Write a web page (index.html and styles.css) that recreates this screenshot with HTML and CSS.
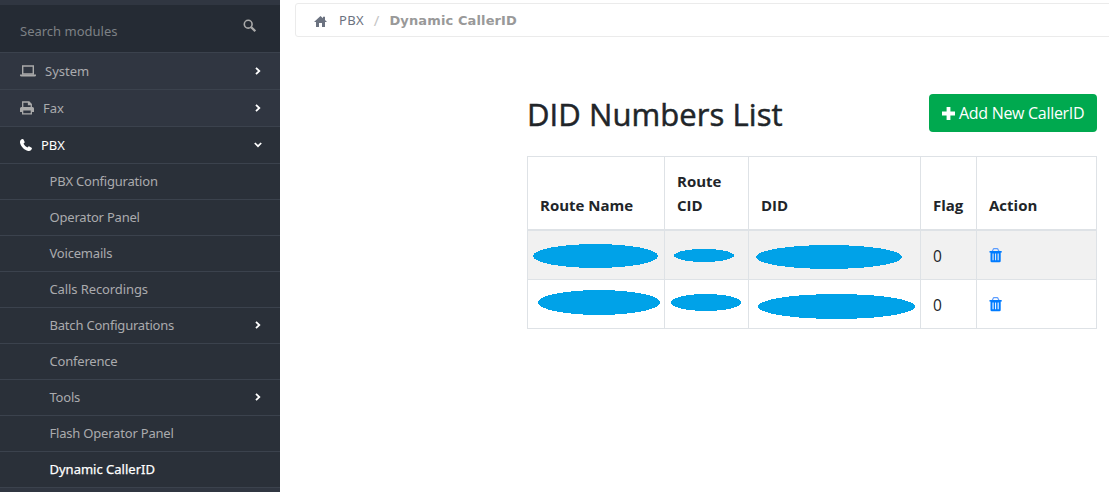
FILE: index.html
```html
<!DOCTYPE html>
<html lang="en">
<head>
<meta charset="utf-8">
<title>Dynamic CallerID</title>
<link rel="stylesheet" href="styles.css">
</head>
<body>
<svg width="0" height="0" class="defs">
  <symbol id="right" viewBox="0 0 6 8"><path d="M1 .8 4.3 4 1 7.2" fill="none" stroke="#fff" stroke-width="1.8"/></symbol>
  <symbol id="trash" viewBox="0 0 14 16"><path d="M3.3 3 4.300 1.200Q4.500.7 5 .7H8.200Q8.700.7 8.900 1.200L9.900 3" fill="none" stroke="#5c9dff" stroke-width="1.3"/><path d="M.5 3H12.7V4.6H.5z" fill="#007bff"/><path fill-rule="evenodd" d="M1.500 4H11.700V13Q11.700 14.300 10.400 14.300H2.800Q1.500 14.300 1.500 13zM3.500 5.600V12.200H4.600V5.600zM6.100 5.600V12.200H7.100V5.600zM8.600 5.600V12.200H9.700V5.600z" fill="#007bff"/></symbol>
</svg>
<div class="app">
  <aside class="sidebar">
    <div class="search"><span>Search modules</span>
      <svg class="lens" width="14" height="14" viewBox="0 0 14 14" fill="none" stroke="#aaa"><circle cx="5.2" cy="5.2" r="3.9" stroke-width="1.6"/><path d="M8.2 8.2 12.3 12.2" stroke-width="2.3"/></svg>
    </div>
    <nav>
      <a class="item"><svg width="16" height="12" viewBox="0 0 16 12"><path d="M2.700 1H13.300V9H2.700z" fill="none" stroke="#aaa" stroke-width="1.4"/><path d="M0 9.500H16V10.500Q16 11.500 14.500 11.500H1.500Q0 11.500 0 10.500z" fill="#aaa"/></svg><span>System</span><svg class="arrow" width="6" height="8"><use href="#right"/></svg></a>
      <a class="item"><svg width="14" height="14" viewBox="0 0 14 14"><path d="M2.700 7V1H9L11.300 3.200V7M8.500 1V3.700H11.300" fill="none" stroke="#aaa" stroke-width="1.3"/><path fill-rule="evenodd" d="M1.500 6H12.500Q14 6 14 7.500V11H12V13.400H2V11H0V7.500Q0 6 1.500 6zM3.300 9.500V12.200H10.700V9.500z" fill="#aaa"/></svg><span>Fax</span><svg class="arrow" width="6" height="8"><use href="#right"/></svg></a>
      <a class="item open"><svg width="12" height="12" viewBox="0 0 12 12"><path d="M2.700.1Q3.200-.1 3.500.5L4.700 2.900Q4.900 3.400 4.400 3.800L3.500 4.700Q4.800 7.100 7.400 8.500L8.400 7.600Q8.900 7.200 9.400 7.500L11.600 8.700Q12.100 9 11.900 9.600C11.500 11.500 10.100 12.200 8.200 11.900C4.300 11.200.4 7.100 0 3.500C-.1 1.600.8.400 2.700.1z" fill="#fff"/></svg><span>PBX</span><svg class="arrow down" width="8" height="6" viewBox="0 0 8 6"><path d="M.8 1 4 4.200 7.200 1" fill="none" stroke="#fff" stroke-width="1.700"/></svg></a>
      <div class="submenu">
        <a><span>PBX Configuration</span></a>
        <a><span>Operator Panel</span></a>
        <a><span>Voicemails</span></a>
        <a class="wide"><span>Calls Recordings</span></a>
        <a><span>Batch Configurations</span><svg class="arrow" width="6" height="8"><use href="#right"/></svg></a>
        <a><span>Conference</span></a>
        <a><span>Tools</span><svg class="arrow" width="6" height="8"><use href="#right"/></svg></a>
        <a><span>Flash Operator Panel</span></a>
        <a class="current"><span>Dynamic CallerID</span></a>
      </div>
    </nav>
  </aside>
  <main>
    <div class="crumbs"><svg width="13" height="11" viewBox="0 0 13 11"><path d="M6.500 0 9 2.300V.8H11V4.100L13 6H11V11H8V7H5V11H2V6H0z" fill="#6b7280"/></svg><span class="crumb">PBX</span><span class="slash">/</span><b>Dynamic CallerID</b></div>
    <section class="panel">
      <header><h1>DID Numbers List</h1><button><svg width="13" height="13" viewBox="0 0 13 13"><path d="M4.600 0H8.400V4.600H13V8.400H8.400V13H4.600V8.400H0V4.600H4.600z" fill="#fff"/></svg><span>Add New CallerID</span></button></header>
      <table>
        <colgroup><col class="c1"><col class="c2"><col class="c3"><col class="c4"><col class="c5"></colgroup>
        <thead><tr><th>Route Name</th><th>Route<br>CID</th><th>DID</th><th>Flag</th><th>Action</th></tr></thead>
        <tbody>
          <tr class="odd"><td class="mask"><svg width="136" height="48"><ellipse cx="67.500" cy="25" rx="62.500" ry="12"/></svg></td><td class="mask"><svg width="83" height="48"><ellipse cx="39" cy="24.500" rx="30" ry="6.500"/></svg></td><td class="mask"><svg width="171" height="48"><ellipse cx="80" cy="26" rx="73" ry="12"/></svg></td><td><span class="num">0</span></td><td><svg class="bin" width="14" height="16"><use href="#trash"/></svg></td></tr>
          <tr><td class="mask"><svg width="136" height="48"><ellipse cx="71" cy="22.500" rx="61" ry="12.500"/></svg></td><td class="mask"><svg width="83" height="48"><ellipse cx="41" cy="22.500" rx="35" ry="8.500"/></svg></td><td class="mask"><svg width="171" height="48"><ellipse cx="87.500" cy="26.500" rx="78.500" ry="12.500"/></svg></td><td><span class="num">0</span></td><td><svg class="bin" width="14" height="16"><use href="#trash"/></svg></td></tr>
        </tbody>
      </table>
    </section>
  </main>
</div>
</body>
</html>
```
FILE: styles.css
```css
* { box-sizing: border-box; }
body { margin: 0; background: #fff; color: #212529; font: 16px/24px "Noto Sans", sans-serif; }
.defs { display: none; }
.app { display: flex; height: 492px; overflow: hidden; }
.sidebar { width: 280px; flex: none; background: #303641; padding-top: 5px; font-size: 13px; line-height: 18px; color: #aaabae; }
.search { height: 47px; background: #252b34; display: flex; justify-content: space-between; padding: 17px 23px 0 20px; color: #7d8185; }
.search svg { margin-top: -3px; }
.item, .submenu a { display: flex; align-items: center; border-top: 1px solid #3b424d; white-space: nowrap; }
.item { height: 37px; padding: 0 19px 1px 20px; }
.item span { margin-left: 9px; }
.arrow { margin-left: auto; }
.arrow.down { margin-right: -1px; }
.open { background: #2a3039; color: #fff; }
.submenu { background: #2a3039; border-bottom: 1px solid #3b424d; }
.submenu a { height: 36px; padding: 0 19px 2px 49.5px; letter-spacing: -.2px; }
.submenu .wide { letter-spacing: -.1px; }
.submenu .current { color: #fff; letter-spacing: 0; }
.current span { -webkit-text-stroke: .25px #fff; }
main { flex: 1; padding: 3px 0 0 15px; }
.crumbs { height: 34px; margin-right: -4px; border: 1px solid #ebebeb; border-radius: 3px; padding-left: 18px; display: flex; align-items: center; font-size: 13px; color: #6b7280; }
.crumbs svg { margin-top: 2px; }
.crumb { margin-left: 12px; letter-spacing: .3px; }
.slash { margin: 0 10px; color: #c5c5c5; font-size: 15px; }
.crumbs b { color: #999; font-family: "DejaVu Sans", sans-serif; font-size: 13px; letter-spacing: .12px; padding-top: 2px; }
.panel { width: 570px; margin: 57px 0 0 232px; }
header { display: flex; justify-content: space-between; height: 38px; margin-bottom: 24px; }
h1 { margin: 1px 0 0; font: 400 31px/38px "Open Sans", sans-serif; letter-spacing: .08px; -webkit-text-stroke: .5px #212529; white-space: nowrap; }
button { width: 168px; height: 38px; border: 0; border-radius: 4px; background: #00a94f; color: #fff; padding: 0 0 0 13px; display: flex; align-items: center; gap: 4px; font: 16px/24px "Open Sans", sans-serif; letter-spacing: -.3px; white-space: nowrap; }
table { width: 570px; table-layout: fixed; border-collapse: separate; border-spacing: 0; border: 1px solid #dee2e6; border-width: 1px 0 0 1px; font: 16px/24px "Open Sans", sans-serif; }
.c1 { width: 137px; } .c2 { width: 84px; } .c3 { width: 172px; } .c4 { width: 56px; } .c5 { width: 120px; }
th, td { border: 1px solid #dee2e6; border-width: 0 1px 1px 0; padding: 12px; text-align: left; white-space: nowrap; }
th { height: 74px; border-bottom-width: 2px; vertical-align: bottom; font-size: 15px; padding: 11px 12px 12px; }
td { height: 49px; }
.num { display: block; margin-top: 2px; font-size: 15.5px; line-height: 22px; }
.odd { background: #f1f1f1; }
td.mask { padding: 0; }
.mask svg { display: block; fill: #00a2e8; shape-rendering: crispEdges; }
.bin { display: block; margin-top: 1px; }
```
